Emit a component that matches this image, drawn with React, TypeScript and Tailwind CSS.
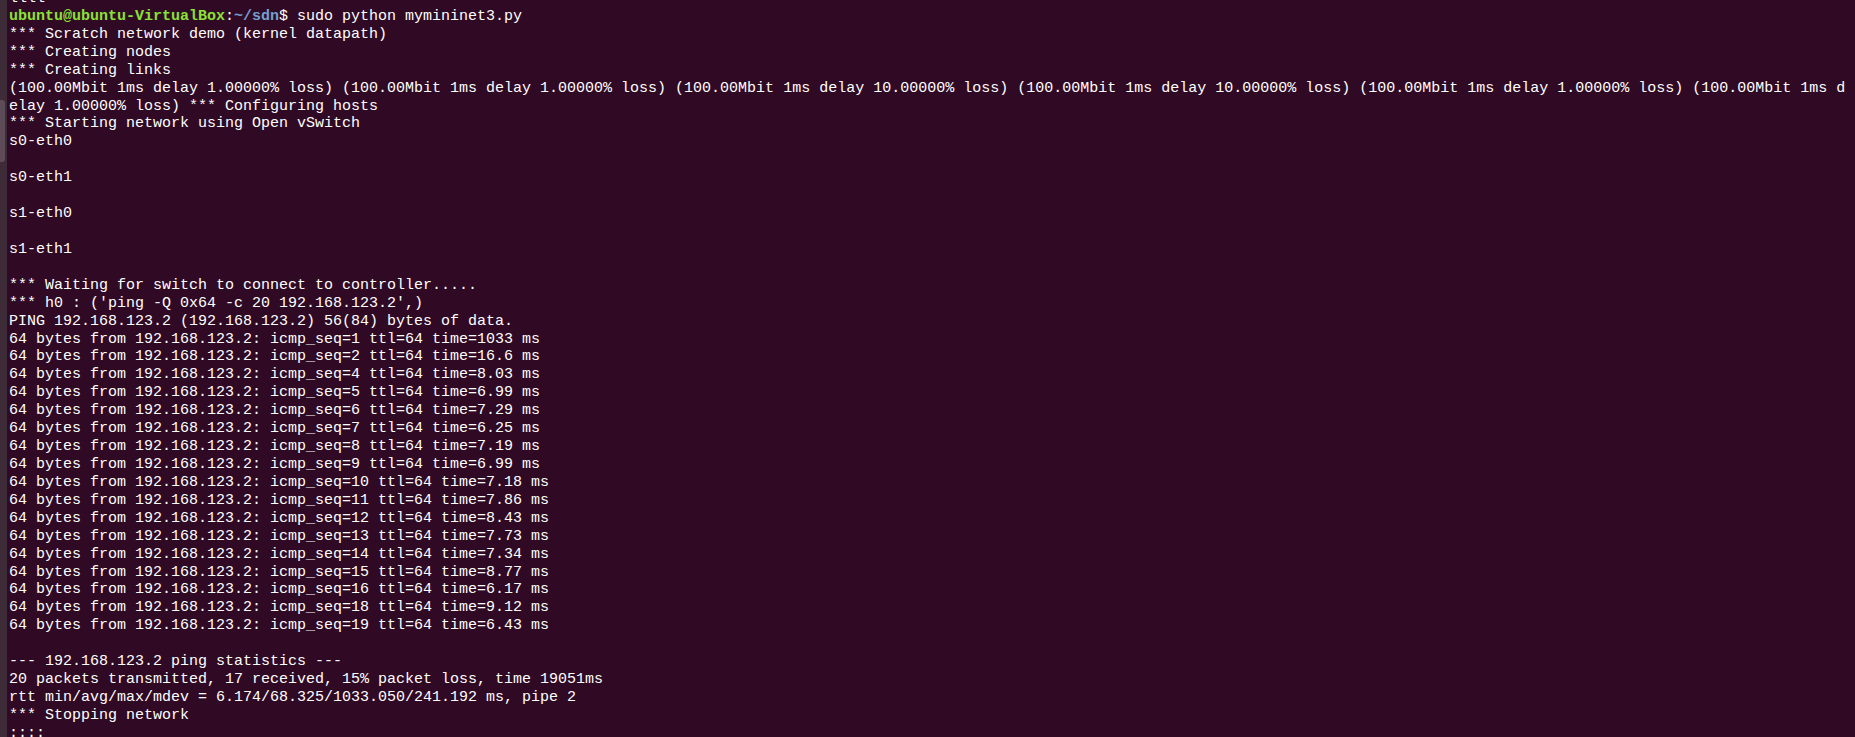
import React from "react";

const pings: [number, string][] = [
  [1, "1033"],
  [2, "16.6"],
  [4, "8.03"],
  [5, "6.99"],
  [6, "7.29"],
  [7, "6.25"],
  [8, "7.19"],
  [9, "6.99"],
  [10, "7.18"],
  [11, "7.86"],
  [12, "8.43"],
  [13, "7.73"],
  [14, "7.34"],
  [15, "8.77"],
  [16, "6.17"],
  [18, "9.12"],
  [19, "6.43"],
];

const before: string[] = [
  "*** Scratch network demo (kernel datapath)",
  "*** Creating nodes",
  "*** Creating links",
  "(100.00Mbit 1ms delay 1.00000% loss) (100.00Mbit 1ms delay 1.00000% loss) (100.00Mbit 1ms delay 10.00000% loss) (100.00Mbit 1ms delay 10.00000% loss) (100.00Mbit 1ms delay 1.00000% loss) (100.00Mbit 1ms d",
  "elay 1.00000% loss) *** Configuring hosts",
  "*** Starting network using Open vSwitch",
  "s0-eth0",
  "",
  "s0-eth1",
  "",
  "s1-eth0",
  "",
  "s1-eth1",
  "",
  "*** Waiting for switch to connect to controller.....",
  "*** h0 : ('ping -Q 0x64 -c 20 192.168.123.2',)",
  "PING 192.168.123.2 (192.168.123.2) 56(84) bytes of data.",
];

const after: string[] = [
  "",
  "--- 192.168.123.2 ping statistics ---",
  "20 packets transmitted, 17 received, 15% packet loss, time 19051ms",
  "rtt min/avg/max/mdev = 6.174/68.325/1033.050/241.192 ms, pipe 2",
  "*** Stopping network",
  "::::",
];

function Line({ children }: { children?: React.ReactNode }) {
  return <div className="h-[17.93px] whitespace-pre">{children}</div>;
}

export default function App() {
  const lines = [
    ...before,
    ...pings.map(
      ([s, t]) => `64 bytes from 192.168.123.2: icmp_seq=${s} ttl=64 time=${t} ms`
    ),
    ...after,
  ];
  return (
    <div className="flex h-[737px] w-[1855px] overflow-hidden bg-[#300a24]">
      <div className="flex w-[7px] shrink-0 flex-col bg-[#3d2b37] pt-[100px]">
        <div className="h-[62px] w-[5px] rounded-r-[3px] bg-[#5d4c57]" />
      </div>
      <div
        className="-mt-[10px] flex-1 pl-[2px] text-[15px] leading-[17.93px] text-white"
        style={{ fontFamily: '"Liberation Mono", "DejaVu Sans Mono", monospace' }}
      >
        <Line>llll</Line>
        <Line>
          <span className="font-bold text-[#8ae234]">ubuntu@ubuntu-VirtualBox</span>
          <span>:</span>
          <span className="font-bold text-[#729fcf]">~/sdn</span>
          <span>$ sudo python mymininet3.py</span>
        </Line>
        {lines.map((l, i) => (
          <Line key={i}>{l}</Line>
        ))}
      </div>
    </div>
  );
}
